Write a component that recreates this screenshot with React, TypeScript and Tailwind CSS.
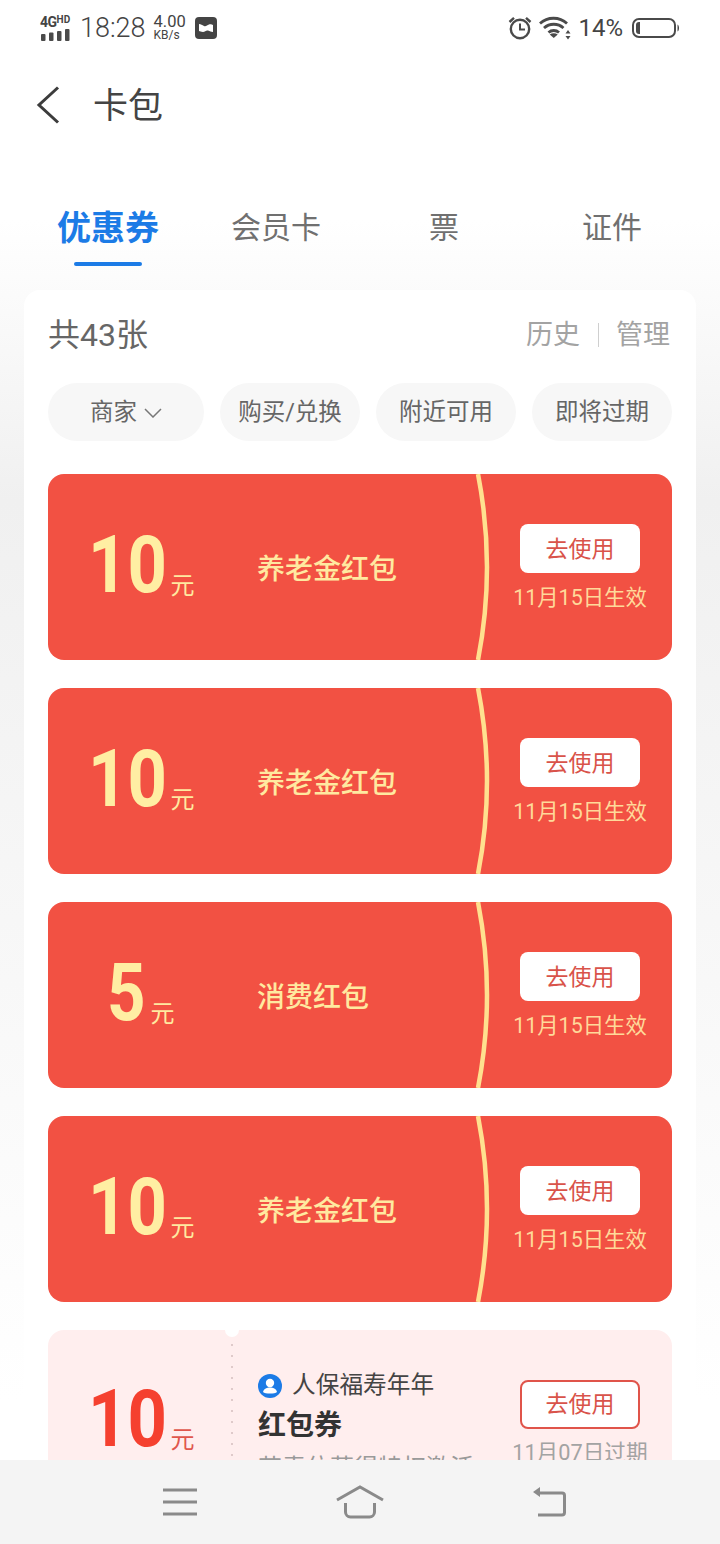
const FONT = "font-['Roboto','Noto_Sans_CJK_SC',sans-serif]";

function StatusBar() {
  return (
    <div className="flex h-[56px] items-center justify-between pl-[40px] pr-[40px] text-[#444]">
      <div className="flex items-center">
        <div className="flex w-[32px] flex-col">
          <div className="flex h-[13px] items-start font-bold leading-none">
            <span className="text-[14px] tracking-[-0.5px]">4G</span>
            <span className="text-[10px]">HD</span>
          </div>
          <svg width="31" height="12" viewBox="0 0 31 12" className="mt-[1px]">
            <rect x="1" y="5" width="4.500" height="7" rx="1" fill="#4a4a4a" />
            <rect x="9" y="3.500" width="4.500" height="8.500" rx="1" fill="#4a4a4a" />
            <rect x="17" y="2" width="4.500" height="10" rx="1" fill="#4a4a4a" />
            <rect x="25" y="0" width="4.500" height="12" rx="1" fill="#4a4a4a" />
          </svg>
        </div>
        <span className="ml-[8px] text-[27px] font-light leading-none">18:28</span>
        <div className="ml-[8px] flex w-[34px] flex-col items-start leading-none">
          <span className="text-[16.500px] leading-[14px]">4.00</span>
          <span className="text-[12px] leading-[12px]">KB/s</span>
        </div>
        <svg width="22" height="22" viewBox="0 0 22 22" className="ml-[7px]">
          <rect width="22" height="22" rx="4" fill="#444" />
          <path d="M4 7c2 0 3 1 5 2s3-1 5-1.500 3 .500 4 .500v7c-2 0-3-1-5-1.500s-3 1.500-5 1.500-3-1-4-1z" fill="#fff" />
        </svg>
      </div>
      <div className="flex items-center">
        <svg width="24" height="24" viewBox="0 0 24 24" fill="none" stroke="#4a4a4a" strokeWidth="2.400">
          <circle cx="12" cy="13" r="9.200" />
          <path d="M12 7.500V13.500H17" strokeWidth="2" />
          <path d="M1.500 6 6 1.800M22.500 6 18 1.800" />
        </svg>
        <svg width="33" height="24" viewBox="0 0 33 24" fill="none" stroke="#4a4a4a" strokeWidth="2.800" className="ml-[7px]">
          <path d="M1 7.500C8.500 .500 20.500 .500 28 7.500" />
          <path d="M5 12c5.500-5 14-5 19.500 0" />
          <path d="M9.500 16.500c3-2.700 7.500-2.700 10.500 0" />
          <path d="M14.750 22l-4-3.500c2.300-1.700 5.700-1.700 8 0z" fill="#4a4a4a" stroke="none" />
          <path d="M29 14l-2.500 3.500h5zM29 23.500l-2.500-3.500h5z" fill="#4a4a4a" stroke="none" />
        </svg>
        <span className="ml-[6px] text-[24px] leading-none">14%</span>
        <svg width="48" height="20" viewBox="0 0 48 20" fill="none" className="ml-[9px]">
          <rect x="1" y="1" width="42" height="18" rx="6" stroke="#4a4a4a" strokeWidth="2" />
          <path d="M4 7a3 3 0 0 1 3-3h1v12H7a3 3 0 0 1-3-3z" fill="#4a4a4a" />
          <path d="M45.500 6.500c2 1 2 6 0 7z" fill="#4a4a4a" />
        </svg>
      </div>
    </div>
  );
}

function Tabs() {
  const tabs = ["优惠券", "会员卡", "票", "证件"];
  return (
    <div className="mt-[77px] grid h-[92px] grid-cols-4 px-[24px]">
      {tabs.map((tab, i) => (
        <div key={tab} className="flex flex-col items-center">
          <span
            className={
              i === 0
                ? "h-[50px] text-[34px] font-bold leading-[50px] text-[#1c7be6]"
                : "h-[50px] text-[30px] leading-[50px] text-[#707070]"
            }
          >
            {tab}
          </span>
          {i === 0 && <div className="mt-[9px] h-[4px] w-[68px] rounded-full bg-[#1c7be6]" />}
        </div>
      ))}
    </div>
  );
}

function Amount({ amount, tone }: { amount: string; tone: "gold" | "red" }) {
  return (
    <div
      className={
        tone === "gold"
          ? "mb-[4px] flex w-[188px] items-baseline justify-center text-[#ffeea3]"
          : "flex w-[188px] items-baseline justify-center pt-[50px] text-[#f5402f]"
      }
    >
      <span
        className={
          amount.length === 1
            ? "inline-block w-[38px] origin-left translate-x-[-3px] scale-x-[0.85] text-[79px] font-bold leading-none"
            : "inline-block w-[78px] origin-left translate-x-[-2px] scale-x-[0.87] text-[79px] font-bold leading-none"
        }
      >
        {amount}
      </span>
      <span
        className={
          tone === "gold"
            ? "ml-[3px] translate-y-[2px] text-[24px] leading-none text-[#ffe9a0]"
            : "ml-[3px] translate-y-[2px] text-[24px] leading-none text-[#e0574c]"
        }
      >
        元
      </span>
    </div>
  );
}

function RedCoupon({ amount, title }: { amount: string; title: string }) {
  return (
    <div className="relative flex h-[186px] items-center rounded-[16px] bg-[#f25143]">
      <Amount amount={amount} tone="gold" />
      <span className="ml-[21px] mt-[6px] text-[28px] font-medium text-[#ffe9a0]">{title}</span>
      <svg width="20" height="186" viewBox="0 0 20 186" fill="none" className="absolute left-[426px] top-0">
        <path d="M4 0Q22 93 4 186" stroke="#ffe08f" strokeWidth="4.500" />
      </svg>
      <div className="absolute left-[458px] top-[50px] flex w-[148px] flex-col items-center">
        <div className="flex h-[49px] w-[120px] items-center justify-center rounded-[8px] bg-white pt-[3px] text-[23px] text-[#d9534a]">
          去使用
        </div>
        <span className="mt-[11px] whitespace-nowrap text-[21.400px] leading-[28px] text-[#ffd99a]">11月15日生效</span>
      </div>
    </div>
  );
}

function PlainCoupon() {
  return (
    <div className="relative flex h-[186px] rounded-[16px] bg-[#ffeeee]">
      <div className="absolute left-[177px] top-[-7px] h-[14px] w-[14px] rounded-full bg-white" />
      <div className="absolute bottom-0 left-[183px] top-[14px] w-[2px] bg-[repeating-linear-gradient(#dfcaca_0_2px,transparent_2px_11px)]" />
      <Amount amount="10" tone="red" />
      <div className="ml-[22px] flex flex-col pt-[40px]">
        <div className="flex h-[32px] items-center">
          <svg width="24" height="24" viewBox="0 0 24 24">
            <circle cx="12" cy="12" r="12" fill="#1c7be6" />
            <circle cx="12" cy="9" r="4.200" fill="#fff" />
            <path d="M5 18c1-3.500 4-4.500 7-4.500s6 1 7 4.500c-2 2-12 2-14 0z" fill="#fff" />
          </svg>
          <span className="ml-[10px] text-[23.700px] text-[#444]">人保福寿年年</span>
        </div>
        <span className="mt-[4px] text-[28px] font-bold leading-[40px] text-[#333]">红包券</span>
        <span className="mt-[6px] text-[24px] leading-[32px] text-[#9a9a9a]">艾青位药得特权激活</span>
      </div>
      <div className="absolute left-[458px] top-[50px] flex w-[148px] flex-col items-center">
        <div className="flex h-[49px] w-[120px] items-center justify-center rounded-[8px] border-2 border-[#e0544a] bg-white pt-[1px] text-[23px] text-[#d9534a]">
          去使用
        </div>
        <span className="mt-[10px] whitespace-nowrap text-[21.700px] leading-[28px] text-[#a3a3a3]">11月07日过期</span>
      </div>
    </div>
  );
}

function BottomNav() {
  return (
    <div className="absolute bottom-0 left-0 right-0 grid h-[84px] grid-cols-3 bg-[#f4f4f4]">
      <div className="flex items-center justify-end">
        <svg width="34" height="28" viewBox="0 0 34 28" fill="none" stroke="#8a8a8a" strokeWidth="3" className="mb-[1px] mr-[43px]">
          <path d="M0 2H34M0 14H34M0 26H34" />
        </svg>
      </div>
      <div className="flex items-center justify-center">
        <svg width="48" height="34" viewBox="0 0 48 34" fill="none" stroke="#8a8a8a" strokeWidth="3" className="mb-[1px]">
          <path d="M1 15 24 2l23 13" />
          <path d="M9.500 18v9a5 5 0 0 0 5 5h19a5 5 0 0 0 5-5v-9" />
        </svg>
      </div>
      <div className="flex items-center justify-start">
        <svg width="34" height="30" viewBox="0 0 34 30" fill="none" stroke="#8a8a8a" strokeWidth="3" className="ml-[52px]">
          <path d="M6 6h24a2.500 2.500 0 0 1 2.500 2.500v17a2.500 2.500 0 0 1-2.500 2.500H6" />
          <path d="M8 0v10L1 5z" fill="#8a8a8a" stroke="none" />
        </svg>
      </div>
    </div>
  );
}

export default function App() {
  const chips = ["购买/兑换", "附近可用", "即将过期"];
  return (
    <div
      className={`${FONT} relative h-[1544px] w-[720px] overflow-hidden bg-[linear-gradient(#ffffff_220px,#f0f0f0_500px,#ffffff_1400px)]`}
    >
      <StatusBar />
      <div className="flex h-[70px] items-center pl-[36px] pt-[28px]">
        <svg width="24" height="38" viewBox="0 0 24 38" fill="none" stroke="#3c3c3c" strokeWidth="3" className="mt-[-1px]">
          <path d="M22 1.500 3 19l19 17.500" />
        </svg>
        <span className="ml-[33px] mt-[4px] text-[35px] text-[#444]">卡包</span>
      </div>
      <Tabs />
      <div className="mx-[24px] mt-[-5px] rounded-t-[16px] bg-white px-[24px] pb-[60px]">
        <div className="flex h-[90px] items-center justify-between">
          <span className="text-[32px] text-[#666]">共43张</span>
          <div className="mr-[2px] flex items-center text-[27px] text-[#a3a3a3]">
            <span>历史</span>
            <div className="mx-[17.500px] h-[24px] w-px bg-[#cfcfcf]" />
            <span>管理</span>
          </div>
        </div>
        <div className="mt-[3px] flex h-[58px] gap-[16px]">
          <div className="flex w-[156px] items-center justify-center rounded-full bg-[#f7f7f7] pt-[1px] text-[23.500px] text-[#666]">
            商家
            <svg width="18" height="10" viewBox="0 0 18 10" fill="none" stroke="#777" strokeWidth="1.500" className="ml-[7px]">
              <path d="M1 1l8 8 8-8" />
            </svg>
          </div>
          {chips.map((chip) => (
            <div
              key={chip}
              className="flex w-[140px] items-center justify-center rounded-full bg-[#f7f7f7] pt-[1px] text-[23.500px] text-[#666]"
            >
              {chip}
            </div>
          ))}
        </div>
        <div className="mt-[33px] flex flex-col gap-[28px]">
          <RedCoupon amount="10" title="养老金红包" />
          <RedCoupon amount="10" title="养老金红包" />
          <RedCoupon amount="5" title="消费红包" />
          <RedCoupon amount="10" title="养老金红包" />
          <PlainCoupon />
        </div>
      </div>
      <BottomNav />
    </div>
  );
}
